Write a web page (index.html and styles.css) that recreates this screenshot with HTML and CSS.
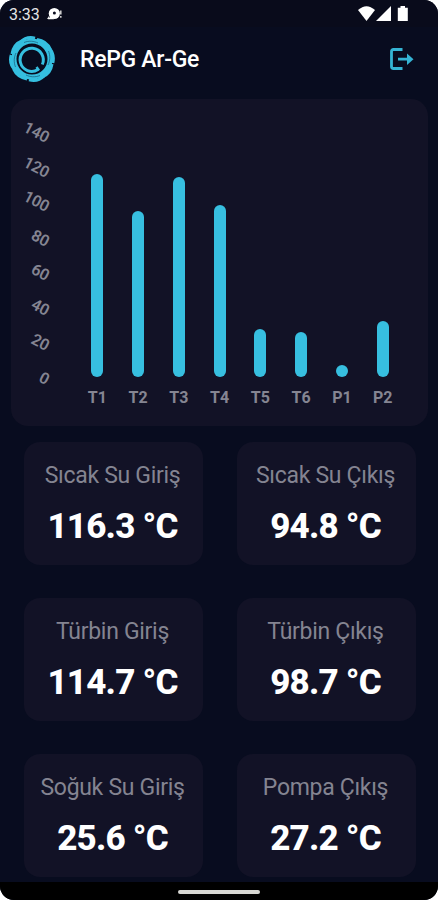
FILE: index.html
```html
<!DOCTYPE html>
<html lang="tr">
<head>
  <meta charset="UTF-8" />
  <title>RePG Ar-Ge</title>
  <meta name="viewport" content="width=device-width, initial-scale=1.0"/>
  <link rel="stylesheet" href="styles.css">
</head>
<body>

<div class="screen">
  <div class="status-bar">
    <span class="clock">3:33</span>
    <svg class="notify" width="16" height="14" viewBox="0 0 16 14">
      <path d="M0 12l2-3v3z" fill="#eee"/>
      <circle cx="7.3" cy="6.5" r="5.6" fill="#fff"/>
      <path d="M1 12.2l3-3.8 3 3.8z" fill="#fff"/>
      <circle cx="7.4" cy="6" r="1.5" fill="#0a0c1e"/>
      <path d="M13.8 3.500v4M13.8 9v1.8" stroke="#ccc" stroke-width="1.6"/>
    </svg>
    <svg class="signals" width="51" height="16" viewBox="0 0 51 16">
      <path d="M0 4Q8.500-3.600 17 4L8.500 15z" fill="#fff"/>
      <path d="M33 0v15H18z" fill="#fff"/>
      <path d="M42.500 0h4.500v1.800h2.800V15h-10V1.800h2.700z" fill="#fff"/>
    </svg>
  </div>

  <header class="app-bar">
    <svg class="logo" width="46" height="46" viewBox="0 0 46 46" fill="none" stroke="#35bfe0">
      <circle cx="23" cy="23" r="18" stroke-width="5"/>
      <!-- swirl blades -->
      <g stroke-width="3">
        <path d="M11 6.500C15 2.500 21 .8 26 2.200"/>
        <path d="M28 3.500c6 .8 11 4.500 13.500 10"/>
        <path d="M40 12c4 4 5 10 3.800 15"/>
        <path d="M43 28c-.8 6-4.500 11-10 13"/>
        <path d="M35 40c-4 4-10 5.200-15 3.800"/>
        <path d="M18 43c-6-1-11-4.500-13.500-10"/>
        <path d="M6 34c-4-4-5.200-10-3.800-15"/>
        <path d="M3 18c1-6 4.500-11 10-13"/>
      </g>
      <g stroke="#175a78" stroke-width=".7">
        <path d="M15 6.500c5-2 10-1.500 14 .5"/>
        <path d="M39.500 15c2 5 1.500 10-.5 14"/>
        <path d="M31 39.500c-5 2-10 1.500-14-.5"/>
        <path d="M6.500 31c-2-5-1.500-10 .5-14"/>
      </g>
      <path d="M29 33.500A11.600 11.600 0 1 1 33.300 28.500" stroke-width="3"/>
      <path d="M27.500 31l2.500 3.500" stroke-width="2.500"/>
    </svg>
    <h1 class="title">RePG Ar-Ge</h1>
    <svg class="logout" width="24" height="22" viewBox="0 0 24 22" fill="none" stroke="#35b4d4" stroke-width="2.800">
      <path d="M12.500 1.500H3.500Q1.500 1.500 1.500 3.500v15q0 2 2 2h9" />
      <path d="M8 11.200h12"/>
      <path d="M17 5.500l6.500 5.700L17 17z" fill="#35b4d4" stroke="none"/>
    </svg>
  </header>

  <section class="chart">
    <div class="y-axis">
      <span>140</span>
      <span>120</span>
      <span>100</span>
      <span>80</span>
      <span>60</span>
      <span>40</span>
      <span>20</span>
      <span>0</span>
    </div>
    <div class="bars">
      <div class="col"><div class="bar" style="height:203px"></div><span>T1</span></div>
      <div class="col"><div class="bar" style="height:166px"></div><span>T2</span></div>
      <div class="col"><div class="bar" style="height:200px"></div><span>T3</span></div>
      <div class="col"><div class="bar" style="height:172px"></div><span>T4</span></div>
      <div class="col"><div class="bar" style="height:48px"></div><span>T5</span></div>
      <div class="col"><div class="bar" style="height:45px"></div><span>T6</span></div>
      <div class="col"><div class="bar" style="height:12px"></div><span>P1</span></div>
      <div class="col"><div class="bar" style="height:56px"></div><span>P2</span></div>
    </div>
  </section>

  <main class="cards">
    <div class="card"><p class="name">Sıcak Su Giriş</p><p class="value">116.3 °C</p></div>
    <div class="card"><p class="name">Sıcak Su Çıkış</p><p class="value">94.8 °C</p></div>
    <div class="card"><p class="name">Türbin Giriş</p><p class="value">114.7 °C</p></div>
    <div class="card"><p class="name">Türbin Çıkış</p><p class="value">98.7 °C</p></div>
    <div class="card"><p class="name">Soğuk Su Giriş</p><p class="value">25.6 °C</p></div>
    <div class="card"><p class="name">Pompa Çıkış</p><p class="value">27.2 °C</p></div>
  </main>

  <div class="nav-bar"><div class="handle"></div></div>
</div>

</body>
</html>
```
FILE: styles.css
```css
* {
  box-sizing: border-box;
}
body {
  margin: 0;
  background-color: #fff;
  font-family: Roboto, sans-serif;
  color: #fff;
}
h1, p {
  margin: 0;
}
.screen {
  display: flex;
  flex-direction: column;
  width: 438px;
  height: 900px;
  background-color: #080c1f;
  border-radius: 14px;
  overflow: hidden;
}
.status-bar {
  display: flex;
  align-items: center;
  height: 27px;
  padding: 1px 29px 0 9px;
  background-color: #090b1b;
}
.clock {
  padding-top: 1px;
  font-size: 16px;
  line-height: 26px;
  color: #e4e4e6;
}
.notify {
  margin-left: 7px;
}
.signals {
  margin-left: auto;
}
.app-bar {
  display: flex;
  align-items: center;
  height: 64px;
  padding: 0 24px 0 9px;
}
.title {
  margin-left: 25px;
  padding-top: 2px;
  font-size: 23px;
  font-weight: 500;
  line-height: 28px;
  letter-spacing: -0.3px;
}
.logout {
  margin-left: auto;
}
.chart {
  display: flex;
  height: 327px;
  margin: 8px 10px 0 11px;
  background-color: #121226;
  border-radius: 17px;
  color: #858592;
  font-weight: 700;
}
.y-axis {
  display: flex;
  flex-direction: column;
  width: 38px;
  padding-top: 18px;
  font-size: 16px;
  text-align: right;
}
.y-axis span {
  height: 34.6px;
  line-height: 34.6px;
  transform: rotate(28deg);
  transform-origin: 28px 50%;
  font-weight: 600;
  letter-spacing: -0.3px;
}
.bars {
  display: flex;
  width: 326px;
  margin-left: 28px;
  padding-top: 12px;
}
.col {
  display: flex;
  flex-direction: column;
  align-items: center;
  justify-content: flex-end;
  width: 40.75px;
  height: 299px;
  font-size: 16px;
  line-height: 20px;
}
.col span {
  margin-top: 11px;
  margin-bottom: 2px;
}
.bar {
  width: 12px;
  background-color: #37bfe0;
  border-radius: 6px;
}
.cards {
  display: grid;
  grid-template-columns: 179px 179px;
  grid-auto-rows: 123px;
  gap: 33px 34px;
  padding: 16px 0 0 24px;
}
.card {
  padding-right: 2px;
  background-color: #121226;
  border-radius: 16px;
  text-align: center;
}
.name {
  padding-top: 19px;
  font-size: 23px;
  line-height: 30px;
  letter-spacing: -0.3px;
  color: #848491;
}
.value {
  padding-top: 15px;
  font-size: 35px;
  font-weight: 800;
  line-height: 42px;
  letter-spacing: -0.8px;
}
.nav-bar {
  display: flex;
  justify-content: center;
  height: 18px;
  margin-top: auto;
  padding-top: 8px;
  background-color: #000;
}
.handle {
  width: 82px;
  height: 4px;
  background-color: #d8d8d4;
  border-radius: 2px;
}
```
